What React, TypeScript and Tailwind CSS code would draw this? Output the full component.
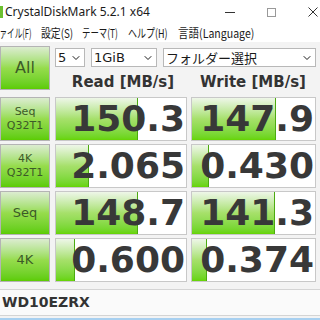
import { ChevronDown } from 'lucide-react'

type Row = { top: string; bottom?: string; read: string; readFill: number; write: string; writeFill: number }

const rows: Row[] = [
  { top: 'Seq', bottom: 'Q32T1', read: '150.3', readFill: 82, write: '147.9', writeFill: 84 },
  { top: '4K', bottom: 'Q32T1', read: '2.065', readFill: 33, write: '0.430', writeFill: 17 },
  { top: 'Seq', read: '148.7', readFill: 82, write: '141.3', writeFill: 83 },
  { top: '4K', read: '0.600', readFill: 19, write: '0.374', writeFill: 15 },
]

function GreenButton({ children }: { children: React.ReactNode }) {
  return (
    <div className="w-[50px] h-[44px] shrink-0 border border-[#b4b4b4] bg-gradient-to-b from-[#dcecd0] via-[#96dc4c] to-[#5ccc00] flex flex-col items-center justify-center text-[#3c5a28] leading-[14px]">
      {children}
    </div>
  )
}

function ValueBox({ value, fill, width }: { value: string; fill: number; width: string }) {
  return (
    <div className={`relative h-[44px] ${width} shrink-0 border border-[#c8c8c8] bg-white overflow-hidden`}>
      <div
        className="absolute left-0 top-0 bottom-0 border-r border-[#4caa10] bg-gradient-to-b from-[#eef6e8] via-[#a6e06a] to-[#66d400]"
        style={{ width: fill }}
      />
      <div className="relative h-full flex items-center justify-end pr-[1px] text-[36px] font-bold text-[#383838] font-['DejaVu_Sans',sans-serif]">
        {value}
      </div>
    </div>
  )
}

function MenuItem({ label, w, scale }: { label: string; w: string; scale: string }) {
  return (
    <span className={`${w} shrink-0 whitespace-nowrap`}>
      <span className={`inline-block origin-left ${scale}`}>{label}</span>
    </span>
  )
}

export default function App() {
  return (
    <div className="w-[320px] h-[320px] overflow-hidden bg-[#f3f3f3] font-['Noto_Sans','Noto_Sans_CJK_JP',sans-serif] relative">
      {/* title bar */}
      <div className="h-[24px] bg-white flex items-center">
        <div className="w-[3px] h-[12px] bg-[#6cc030] mr-[2px]" />
        <span className="text-[12px] text-[#1a1a1a] font-['Noto_Sans',sans-serif]">CrystalDiskMark 5.2.1 x64</span>
        <div className="ml-auto flex items-center">
          <div className="w-[10px] h-[1px] bg-[#333] mr-[32px]" />
          <div className="w-[9px] h-[9px] border border-[#999] mr-[32px]" />
          <svg width="10" height="10" viewBox="0 0 10 10" className="mr-[2px]">
            <path d="M0.5 0.5 L9.5 9.5 M9.5 0.5 L0.5 9.5" stroke="#333" strokeWidth="1" />
          </svg>
        </div>
      </div>
      {/* menu */}
      <div className="h-[18px] bg-white flex items-center text-[12px] text-[#1a1a1a] font-['Noto_Sans_CJK_JP',sans-serif] overflow-hidden">
        <span className="ml-[-8px] w-[49px] shrink-0 whitespace-nowrap">
          <span className="inline-block origin-left scale-x-[0.63]">ファイル(F)</span>
        </span>
        <MenuItem label="設定(S)" w="w-[41px]" scale="scale-x-[0.82]" />
        <MenuItem label="テーマ(T)" w="w-[46px]" scale="scale-x-[0.7]" />
        <MenuItem label="ヘルプ(H)" w="w-[50px]" scale="scale-x-[0.75]" />
        <MenuItem label="言語(Language)" w="w-[90px]" scale="scale-x-[0.88]" />
      </div>

      <div className="flex flex-col gap-[3px] pt-[4px]">
        {/* top row */}
        <div className="flex gap-[5px]">
          <GreenButton>
            <span className="text-[16px] font-['DejaVu_Sans',sans-serif]">All</span>
          </GreenButton>
          <div className="flex flex-col">
            <div className="flex gap-[6px] mt-[2px] text-[13px] text-[#1a1a1a] font-['DejaVu_Sans','Noto_Sans_CJK_JP',sans-serif]">
              <div className="w-[30px] h-[19px] bg-white border border-[#b8b8b8] flex items-center justify-between px-[2px]">
                <span>5</span>
                <ChevronDown size={12} strokeWidth={2} />
              </div>
              <div className="w-[66px] h-[19px] bg-white border border-[#b8b8b8] flex items-center justify-between px-[2px]">
                <span>1GiB</span>
                <ChevronDown size={12} strokeWidth={2} />
              </div>
              <div className="w-[153px] h-[19px] bg-white border border-[#b8b8b8] flex items-center justify-between px-[2px]">
                <span className="font-['Noto_Sans_CJK_JP',sans-serif]">フォルダー選択</span>
                <ChevronDown size={12} strokeWidth={2} />
              </div>
            </div>
            <div className="flex text-[15px] font-bold text-[#333] font-['DejaVu_Sans',sans-serif] mt-[4px]">
              <div className="w-[136px] text-center">Read [MB/s]</div>
              <div className="w-[124px] text-center">Write [MB/s]</div>
            </div>
          </div>
        </div>

        {rows.map((r, i) => (
          <div key={i} className="flex">
            <GreenButton>
              <span className={`${r.bottom ? 'text-[11px]' : 'text-[13px]'} font-['DejaVu_Sans',sans-serif]`}>{r.top}</span>
              {r.bottom && <span className="text-[11px] font-['DejaVu_Sans',sans-serif]">{r.bottom}</span>}
            </GreenButton>
            <div className="ml-[5px]">
              <ValueBox value={r.read} fill={r.readFill} width="w-[132px]" />
            </div>
            <div className="ml-[4px]">
              <ValueBox value={r.write} fill={r.writeFill} width="w-[125px]" />
            </div>
          </div>
        ))}

        <div className="h-[27px] mt-[4px] bg-[#fafafa] border-y border-[#d4d4d4] flex items-center pl-[2px] text-[14px] font-bold text-[#333] font-['DejaVu_Sans',sans-serif]">
          WD10EZRX
        </div>
      </div>
      <div className="absolute left-0 right-0 bottom-0 h-[2px] bg-[#a8d0f0]" />
    </div>
  )
}
